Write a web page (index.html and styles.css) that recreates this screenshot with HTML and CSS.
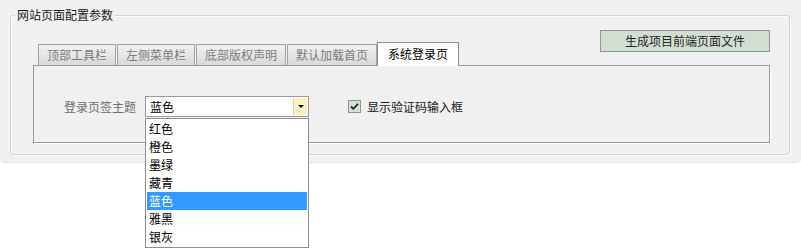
FILE: index.html
```html
<!DOCTYPE html>
<html lang="zh-CN">
<head>
<meta charset="utf-8">
<title>网站页面配置参数</title>
<link rel="stylesheet" href="styles.css">
</head>
<body>
<div class="page">
<div class="window">
  <section class="group">
    <h2 class="group-title">网站页面配置参数</h2>
    <div class="group-body">
      <div class="header">
        <div class="tabs">
          <div class="tab">顶部工具栏</div>
          <div class="tab">左侧菜单栏</div>
          <div class="tab">底部版权声明</div>
          <div class="tab">默认加载首页</div>
          <div class="tab tab-active">系统登录页</div>
        </div>
        <button class="gen-btn">生成项目前端页面文件</button>
      </div>
      <div class="tab-panel">
        <div class="form-row">
          <span class="field-label">登录页签主题</span>
          <div class="combo-wrap">
            <div class="combo">
              <span class="combo-value">蓝色</span>
              <span class="combo-btn"><span class="arrow"></span></span>
            </div>
            <ul class="combo-list">
              <li class="combo-item">红色</li>
              <li class="combo-item">橙色</li>
              <li class="combo-item">墨绿</li>
              <li class="combo-item">藏青</li>
              <li class="combo-item combo-item-selected">蓝色</li>
              <li class="combo-item">雅黑</li>
              <li class="combo-item">银灰</li>
            </ul>
          </div>
          <label class="check">
            <span class="check-box">
              <svg width="9" height="9" viewBox="0 0 9 9"><path d="M1 4.5 L3.3 6.8 L8 1.8" fill="none" stroke="#1b2a1b" stroke-width="1.8"/></svg>
            </span>
            <span class="check-text">显示验证码输入框</span>
          </label>
        </div>
      </div>
    </div>
  </section>
</div>
</div>
</body>
</html>
```
FILE: styles.css
```css
* { box-sizing: border-box; }
html, body {
  margin: 0;
  padding: 0;
  background: #ffffff;
  min-height: 251px;
}
body {
  font-family: "Noto Sans CJK SC", "Liberation Sans", sans-serif;
  font-size: 12px;
  color: #000;
}
.page {
  min-height: 251px;
}
.window {
  background: #f0f0f0;
  height: 163px;
  padding-top: 15px;
  border-radius: 0 0 5px 5px;
  border-bottom: 1px solid #e4e4e4;
}
.group {
  position: relative;
  margin: 0 11px 0 10px;
  border: 1px solid #d3d3d3;
  border-radius: 3px;
  box-shadow: inset 1px 1px 0 #ffffff, 1px 1px 0 #ffffff;
}
.group-title {
  position: absolute;
  top: -9px;
  left: 4px;
  margin: 0;
  padding: 0 2px;
  font-size: 12px;
  font-weight: normal;
  line-height: 16px;
  height: 16px;
  background: #f0f0f0;
  color: #1c1c1c;
}
.group-body {
  padding: 7px 19px 11px 22px;
}
.header {
  display: flex;
  justify-content: space-between;
  height: 42px;
}
.tabs {
  display: flex;
  align-items: flex-end;
  padding-left: 5px;
  gap: 1px;
  position: relative;
  z-index: 2;
}
.tab {
  height: 21px;
  line-height: 20px;
  padding: 0 8px;
  border: 1px solid #a3a3a3;
  border-bottom: none;
  background: linear-gradient(#f2f2f2, #d9d9d9);
  color: #7c7c7c;
  white-space: nowrap;
}
.tab-active {
  height: 24px;
  margin-bottom: -1px;
  margin-left: -1px;
  padding: 0 10px;
  line-height: 21px;
  background: #ffffff;
  border-color: #8e8e8e;
  color: #000;
}
.gen-btn {
  align-self: flex-start;
  margin-top: 7px;
  width: 170px;
  height: 22px;
  padding: 0;
  font-family: inherit;
  font-size: 12px;
  line-height: 20px;
  color: #262626;
  background: #d2ded2;
  border: 1px solid #8c9b8c;
}
.tab-panel {
  height: 78px;
  border: 1px solid #9a9a9a;
  box-shadow: 1px 1px 0 #ffffff;
  padding: 30px 0 0 30px;
}
.form-row {
  display: flex;
  align-items: center;
  height: 21px;
}
.field-label {
  color: #6e6e6e;
  margin-right: 9px;
  line-height: 21px;
}
.combo-wrap {
  position: relative;
  width: 164px;
  height: 21px;
}
.combo {
  display: flex;
  height: 21px;
  border: 1px solid #9b9b9b;
  background: #fff;
}
.combo-value {
  flex: 1;
  padding-left: 4px;
  line-height: 19px;
  color: #000;
}
.combo-btn {
  width: 14px;
  margin: 1px 1px 1px 0;
  background: #fdf0c3;
  border-left: 1px solid #ead591;
  display: flex;
  align-items: center;
  justify-content: center;
}
.arrow {
  width: 0;
  height: 0;
  border-left: 3px solid transparent;
  border-right: 3px solid transparent;
  border-top: 3px solid #000;
}
.combo-list {
  position: absolute;
  top: 22px;
  left: 0;
  width: 164px;
  margin: 0;
  padding: 1px;
  list-style: none;
  background: #fff;
  border: 1px solid #8f8f8f;
  z-index: 5;
}
.combo-item {
  height: 18px;
  line-height: 18px;
  padding-left: 2px;
  color: #000;
}
.combo-item-selected {
  background: #3399ff;
  color: #fff;
}
.check {
  display: flex;
  align-items: center;
  margin-left: 39px;
}
.check-box {
  width: 13px;
  height: 13px;
  border: 1px solid #8a998a;
  background: #d5dfd5;
  display: flex;
  align-items: center;
  justify-content: center;
  margin-right: 6px;
}
.check-box svg { display: block; }
.check-text {
  color: #1a1a1a;
  line-height: 21px;
}
```
